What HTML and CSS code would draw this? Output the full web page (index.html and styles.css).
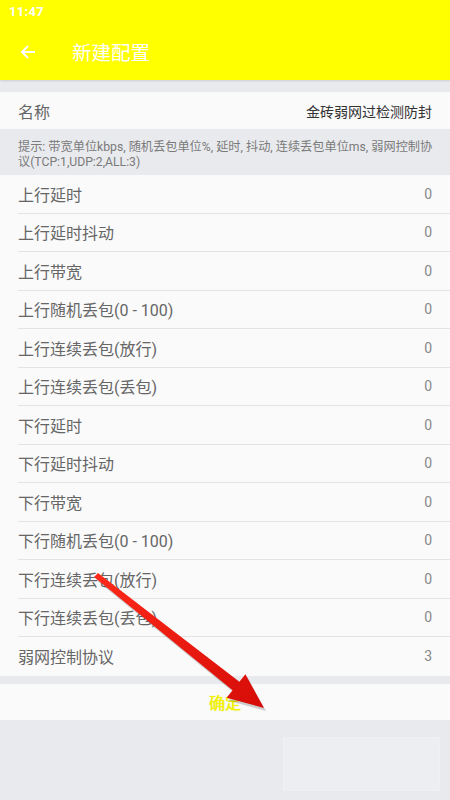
FILE: index.html
```html
<!DOCTYPE html>
<html lang="zh">
<head>
<meta charset="utf-8">
<link rel="stylesheet" href="styles.css">
</head>
<body>
<div class="app">
  <header class="header">
    <div class="status">11:47</div>
    <div class="toolbar">
      <svg class="back" width="18" height="18" viewBox="0 0 18 18"><path d="M16 9H3M9 3L3 9l6 6" fill="none" stroke="#fff" stroke-width="2"/></svg>
      <span class="title">新建配置</span>
    </div>
  </header>
  <div class="name-row">
    <span class="label">名称</span>
    <span class="name-value">金砖弱网过检测防封</span>
  </div>
  <div class="hint">提示: 带宽单位kbps, 随机丢包单位%, 延时, 抖动, 连续丢包单位ms, 弱网控制协议(TCP:1,UDP:2,ALL:3)</div>
  <div class="list">
    <div class="row"><span class="label">上行延时</span><span class="val">0</span></div>
    <div class="row"><span class="label">上行延时抖动</span><span class="val">0</span></div>
    <div class="row"><span class="label">上行带宽</span><span class="val">0</span></div>
    <div class="row"><span class="label">上行随机丢包(0 - 100)</span><span class="val">0</span></div>
    <div class="row"><span class="label">上行连续丢包(放行)</span><span class="val">0</span></div>
    <div class="row"><span class="label">上行连续丢包(丢包)</span><span class="val">0</span></div>
    <div class="row"><span class="label">下行延时</span><span class="val">0</span></div>
    <div class="row"><span class="label">下行延时抖动</span><span class="val">0</span></div>
    <div class="row"><span class="label">下行带宽</span><span class="val">0</span></div>
    <div class="row"><span class="label">下行随机丢包(0 - 100)</span><span class="val">0</span></div>
    <div class="row"><span class="label">下行连续丢包(放行)</span><span class="val">0</span></div>
    <div class="row"><span class="label">下行连续丢包(丢包)</span><span class="val">0</span></div>
    <div class="row last"><span class="label">弱网控制协议</span><span class="val">3</span></div>
  </div>
  <div class="confirm">确定</div>
  <div class="ghost"></div>
  <svg class="arrow" width="450" height="800" viewBox="0 0 450 800">
    <defs>
      <linearGradient id="g" x1="0" y1="0" x2="1" y2="1">
        <stop offset="0" stop-color="#ff2a1a"/>
        <stop offset="1" stop-color="#d60c08"/>
      </linearGradient>
    </defs>
    <polygon points="98,573 94,577 232.6,690.3 226.6,697.7 264,708 245.4,674.3 239.4,681.7" fill="#000" opacity="0.18" transform="translate(2,3)"/>
    <polygon points="98,573 94,577 232.6,690.3 226.6,697.7 264,708 245.4,674.3 239.4,681.7" fill="url(#g)"/>
  </svg>
</div>
</body>
</html>
```
FILE: styles.css
```css
html, body {
  margin: 0;
  padding: 0;
}
body {
  background: #e9eaee;
  font-family: Roboto, "Noto Sans CJK SC", sans-serif;
}
.app {
  position: relative;
  width: 450px;
  height: 800px;
  overflow: hidden;
  background: #e9eaee;
}
.header {
  height: 80px;
  background: #ffff00;
  box-shadow: 0 1px 2px rgba(0,0,0,0.12);
  display: flex;
  flex-direction: column;
}
.status {
  height: 24px;
  padding-left: 9px;
  color: #fff;
  font-size: 13px;
  font-weight: bold;
  line-height: 24px;
  letter-spacing: 0.3px;
}
.toolbar {
  flex: 1;
  display: flex;
  align-items: center;
  padding-left: 19px;
}
.back {
  display: block;
  margin-top: -1px;
}
.title {
  margin-left: 35px;
  color: #fff;
  font-size: 19.5px;
  margin-top: -2px;
}
.name-row {
  margin-top: 12px;
  height: 37px;
  background: #fafafa;
  display: flex;
  align-items: center;
  justify-content: space-between;
  padding: 0 18px;
}
.label {
  color: #666;
  font-size: 16px;
}
.name-value {
  color: #333;
  font-size: 14px;
}
.hint {
  padding: 11px 14px 4px 18px;
  font-size: 12.2px;
  line-height: 15px;
  color: #7a7a7a;
  height: 30px;
}
.list {
  margin-top: 1px;
  background: #fafafa;
}
.row {
  height: 38.5px;
  box-sizing: border-box;
  margin-left: 18px;
  padding-right: 18px;
  border-bottom: 1px solid #e3e3e3;
  display: flex;
  align-items: center;
  justify-content: space-between;
}
.row.last {
  border-bottom: none;
}
.val {
  color: #888;
  font-size: 14px;
}
.confirm {
  margin-top: 8px;
  height: 36px;
  background: #fafafa;
  display: flex;
  align-items: center;
  justify-content: center;
  color: #f4f400;
  font-size: 16px;
  text-shadow: 0 0 1px #d8d800;
}
.ghost {
  margin: 17px 10px 0 283px;
  height: 52px;
  background: #eceef1;
  border: 1px solid #eef0f2;
}
.arrow {
  position: absolute;
  left: 0;
  top: 0;
  pointer-events: none;
}
```
